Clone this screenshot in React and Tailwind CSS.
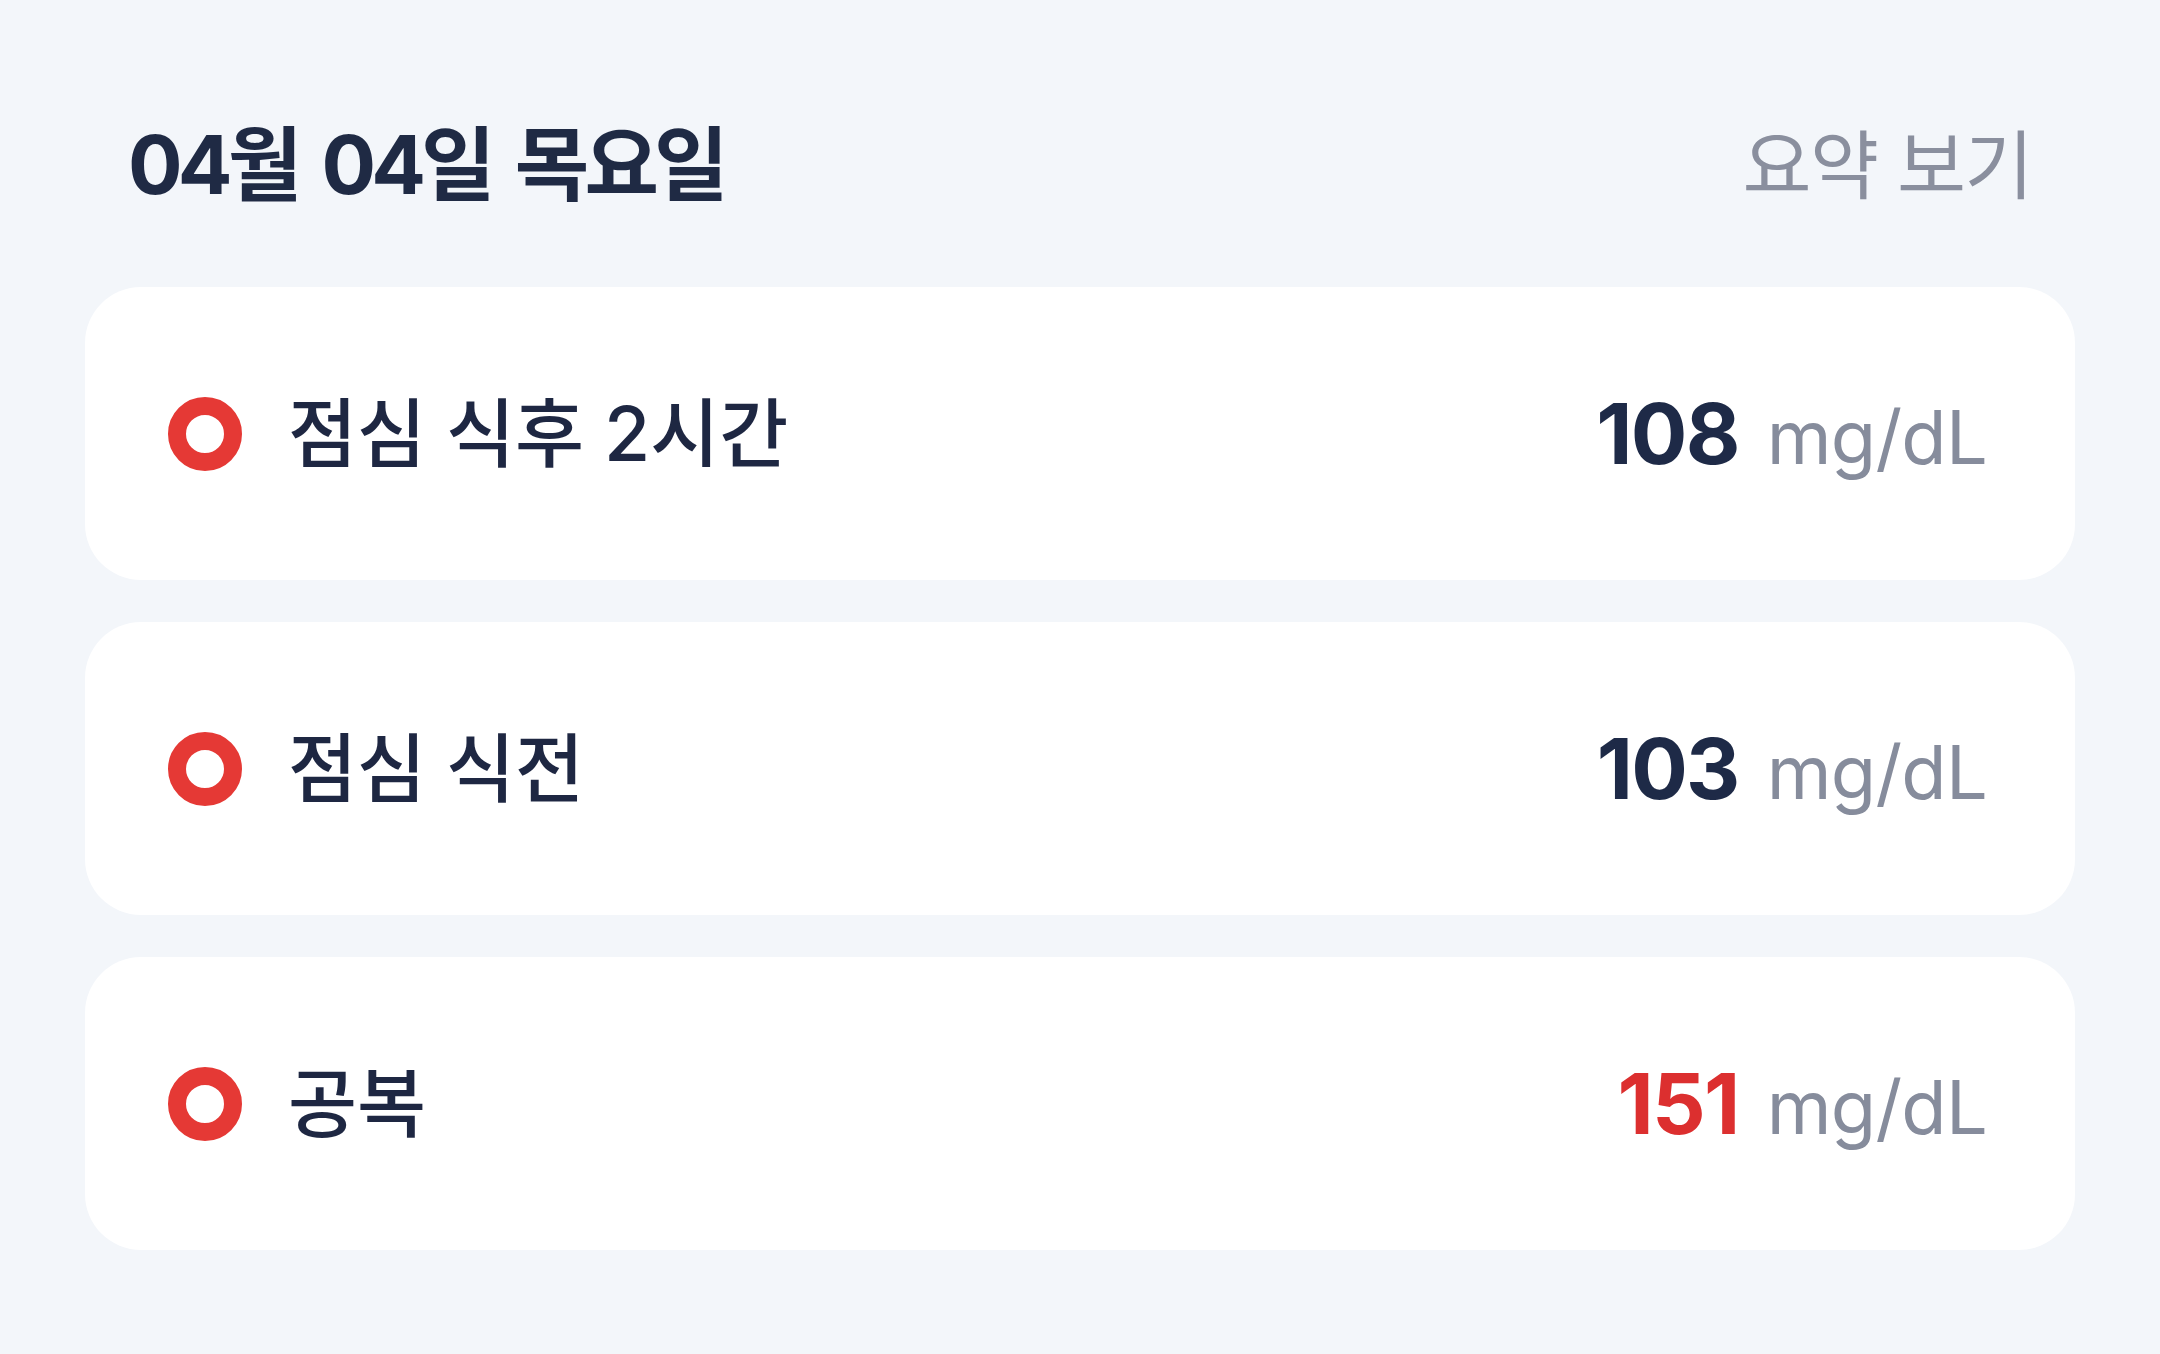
import React from 'react';

const readings = [
  { label: '점심 식후 2시간', value: 108, high: false },
  { label: '점심 식전', value: 103, high: false },
  { label: '공복', value: 151, high: true },
];

function ReadingCard({ label, value, high }) {
  return (
    <div className="flex h-[293px] items-center justify-between rounded-[56px] bg-white pl-[83px] pr-[88px]">
      <div className="flex items-center gap-[46px]">
        <span className="block h-[74px] w-[74px] rounded-full border-[18px] border-[#e53935] bg-white" />
        <span className="text-[75px] font-medium leading-none text-[#1e2742]">{label}</span>
      </div>
      <div className="flex items-baseline gap-[28px]">
        <span className={`text-[84px] font-bold leading-none tracking-[-0.02em] ${high ? 'text-[#dc2f2f]' : 'text-[#1e2a47]'}`}>
          {value}
        </span>
        <span className="text-[74px] leading-none tracking-[-0.01em] text-[#868c9c]">mg/dL</span>
      </div>
    </div>
  );
}

export default function App() {
  return (
    <div
      className="min-h-screen bg-[#f3f6fa] px-[85px] pt-[105px]"
      style={{ fontFamily: 'Inter, "Noto Sans CJK KR", sans-serif' }}
    >
      <div className="flex h-[120px] items-center justify-between pl-[43px] pr-[43px]">
        <h1 className="text-[81px] font-bold leading-none tracking-[-0.06em] [word-spacing:0.12em] text-[#1f2a44]">04월 04일 목요일</h1>
        <button type="button" className="text-[75px] font-normal leading-none tracking-[-0.02em] text-[#8a8f9e]">요약 보기</button>
      </div>
      <div className="mt-[62px] flex flex-col gap-[42px]">
        {readings.map((r) => (
          <ReadingCard key={r.label} {...r} />
        ))}
      </div>
    </div>
  );
}
